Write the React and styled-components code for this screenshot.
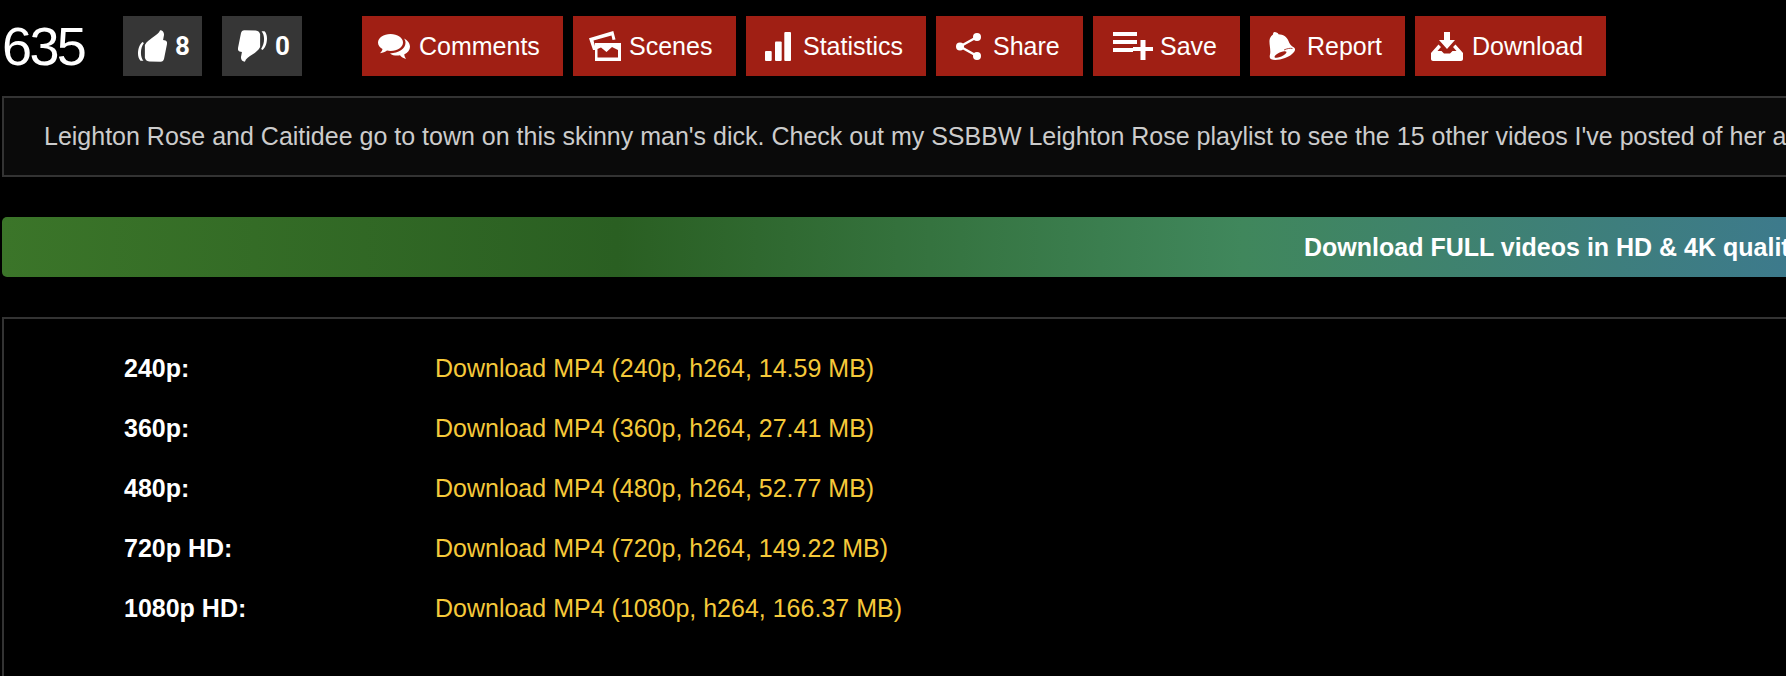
import React from "react";
import styled, { createGlobalStyle } from "styled-components";

const Global = createGlobalStyle`
  html, body { margin: 0; padding: 0; background: #000; overflow: hidden; }
  body { width: 1786px; height: 676px; font-family: "Liberation Sans", Arial, sans-serif; }
`;

const Page = styled.div`
  width: 2600px;
  padding: 16px 0 0 2px;
  box-sizing: border-box;
`;

const Toolbar = styled.div`
  display: flex;
  align-items: stretch;
  height: 60px;
`;

const ViewCount = styled.div`
  width: 121px;
  font-size: 54px;
  line-height: 60px;
  color: #fff;
  letter-spacing: -2.6px;
`;

const VoteButton = styled.div`
  width: ${(p) => p.$w}px;
  margin-right: ${(p) => p.$mr}px;
  box-sizing: border-box;
  padding-left: ${(p) => p.$pl}px;
  background: #363636;
  color: #fff;
  display: flex;
  align-items: center;
  gap: 8px;
  font-family: "Roboto", "Liberation Sans", sans-serif;
  font-weight: 700;
  font-size: 26px;
`;

const ActionButton = styled.div`
  width: ${(p) => p.$w}px;
  margin-right: ${(p) => p.$mr}px;
  box-sizing: border-box;
  padding-left: ${(p) => p.$pl}px;
  background: #a01f14;
  color: #fff;
  display: flex;
  align-items: center;
  gap: ${(p) => p.$gap}px;
  font-size: 25px;
`;

const Description = styled.div`
  margin-top: 20px;
  height: 81px;
  box-sizing: border-box;
  border: 2px solid #333;
  background: #0a0a0a;
  color: #ccc;
  font-size: 25px;
  line-height: 77px;
  padding-left: 40px;
  white-space: nowrap;
`;

const Banner = styled.div`
  margin-top: 40px;
  height: 60px;
  border-radius: 5px;
  background: linear-gradient(90deg, #3b7529 0, #2a5f22 615px, #40875c 1240px, #3d7a8c 1786px, #3d6d9c 2600px);
  color: #fff;
  font-size: 25px;
  font-weight: 700;
  line-height: 60px;
  padding-left: 1302px;
  white-space: nowrap;
`;

const Panel = styled.div`
  margin-top: 40px;
  border: 2px solid #333;
  padding: 19px 0 0 120px;
  height: 400px;
  box-sizing: border-box;
`;

const Row = styled.div`
  display: flex;
  height: 60px;
  align-items: center;
  font-size: 25px;
`;

const Label = styled.div`
  width: 311px;
  font-weight: 700;
  color: #fff;
`;

const DownloadLink = styled.a`
  color: #f5c93a;
  text-decoration: none;
`;

const Icon = styled.svg`
  display: block;
  flex: none;
  fill: #fff;
  transform: ${(p) => (p.$flip ? "rotate(180deg)" : "none")};
`;

const Thumb = ({ down }) => (
  <Icon $flip={down} width="29" height="32" viewBox="0 0 29.5 32">
    <path d="M7 15C9 11 12 9.500 14.500 7.500C18.500 5 21.500 3 22.500 0C25 0 26.500 2 26.500 4.500L25.500 10L28 10.500C29.500 11 29.800 12.500 29.500 14L26.500 29C26 31 25 32 23 32L11.500 31.800C8.500 31.300 7.500 30 7 28Z" />
    <path d="M4.500 12C1 15 0 20 0 24C0 27 1 29.500 2.500 31L5.500 31C3.800 29 3 26 3 23C3 19 4 16 6 13Z" />
  </Icon>
);

const Comments = () => (
  <Icon width="32" height="25" viewBox="0 0 32 25">
    <path d="M12.500 0C5.500 0 0 3.800 0 8.500C0 11.200 1.800 13.500 4.500 15C4.200 16.800 3.300 18 2 19.200C4.800 19 7.200 18 9 16.600C10.200 16.900 11.300 17 12.500 17C19.500 17 25 13.200 25 8.500S19.500 0 12.500 0Z" />
    <path d="M26 4.500C27 5.800 27.500 7.200 27.500 8.800C27.500 14.800 20.500 19.200 12 19.400C13.800 21 16.500 21.500 19 21.500C20 21.500 21 21.400 22 21.200C23.300 22.800 25.300 24.200 28 25C27 23.700 26.400 22.300 26.200 20.600C29.800 19 32 16 32 12.800C32 9.300 29.600 6.200 26 4.500Z" />
  </Icon>
);

const Scenes = () => (
  <Icon width="32" height="30" viewBox="0 0 32 30">
    <path d="M0 7.300L24.300 0L26.500 8.500L23.500 9L22.500 4.500L4.500 9.500L6 15V19L4 19Z" />
    <path fillRule="evenodd" d="M6 12H32V30H6ZM8.500 26.500H29V19L23 16L17.500 21L12 16.500L8.500 18Z" />
  </Icon>
);

const Stats = () => (
  <Icon width="26" height="29" viewBox="0 0 26 29">
    <rect x="0" y="19" width="6.700" height="10" rx="1" />
    <rect x="10" y="9.500" width="6.700" height="19.500" rx="1" />
    <rect x="19.300" y="0" width="6.700" height="29" rx="1" />
  </Icon>
);

const ShareIcon = () => (
  <Icon width="25" height="27" viewBox="0 0 25 27">
    <circle cx="21" cy="4" r="4" />
    <circle cx="4" cy="13.500" r="4" />
    <circle cx="21" cy="23" r="4" />
    <path d="M4 13.500L21 4M4 13.500L21 23" stroke="#fff" strokeWidth="2.500" fill="none" />
  </Icon>
);

const SaveIcon = () => (
  <Icon width="40" height="28" viewBox="0 0 40 28">
    <rect x="0" y="0" width="24" height="4" />
    <rect x="0" y="8" width="24" height="4" />
    <rect x="0" y="16" width="20" height="4" />
    <rect x="20" y="15" width="20" height="4" />
    <rect x="27.500" y="8" width="5" height="20" />
  </Icon>
);

const Bell = () => (
  <Icon width="26" height="28" viewBox="0 0 26 28">
    <path d="M5.500 0C7.500 0 9 1 9.500 2.200C14 2.500 18 4.500 19.500 9C20.500 12 22 14 25 15.500C26.500 16.500 26.300 18.500 25 20C23 22.500 20 24.500 16 26C11 28 5 28.500 2.300 27.300C.5 26.500 .5 24.500 1 22.500C2 18.500 .2 13 .5 8.500C.8 5.500 2.500 3.500 4 2.500C4 1 4.500 0 5.500 0Z" />
    <ellipse cx="11.500" cy="22.500" rx="6.500" ry="2.200" transform="rotate(-24 11.500 22.500)" fill="#a01f14" />
    <path d="M15 18C18 16.500 21 16 23.500 16.500" stroke="#a01f14" strokeWidth=".8" fill="none" />
  </Icon>
);

const DownloadIcon = () => (
  <Icon width="32" height="29" viewBox="0 0 32 29">
    <path d="M13 0H19V8H24L16 17L8 8H13Z" />
    <path d="M7.500 12.500L10 15L6.500 19H10.500L13 21.500H19L21.500 19H25.500L22 15L24.500 12.500L32 21V27C32 28 31 29 30 29H2C1 29 0 28 0 27V21Z" />
  </Icon>
);

const actions = [
  { label: "Comments", icon: <Comments />, w: 201, mr: 10, pl: 16, gap: 9 },
  { label: "Scenes", icon: <Scenes />, w: 163, mr: 10, pl: 16, gap: 8 },
  { label: "Statistics", icon: <Stats />, w: 180, mr: 10, pl: 19, gap: 12 },
  { label: "Share", icon: <ShareIcon />, w: 147, mr: 10, pl: 20, gap: 12 },
  { label: "Save", icon: <SaveIcon />, w: 147, mr: 10, pl: 20, gap: 7 },
  { label: "Report", icon: <Bell />, w: 155, mr: 10, pl: 19, gap: 12 },
  { label: "Download", icon: <DownloadIcon />, w: 191, mr: 0, pl: 16, gap: 9 },
];

const downloads = [
  ["240p:", "Download MP4 (240p, h264, 14.59 MB)"],
  ["360p:", "Download MP4 (360p, h264, 27.41 MB)"],
  ["480p:", "Download MP4 (480p, h264, 52.77 MB)"],
  ["720p HD:", "Download MP4 (720p, h264, 149.22 MB)"],
  ["1080p HD:", "Download MP4 (1080p, h264, 166.37 MB)"],
];

export default function App() {
  return (
    <Page>
      <Global />
      <Toolbar>
        <ViewCount>635</ViewCount>
        <VoteButton $w={79} $mr={20} $pl={15}><Thumb />8</VoteButton>
        <VoteButton $w={80} $mr={60} $pl={16}><Thumb down />0</VoteButton>
        {actions.map((a) => (
          <ActionButton key={a.label} $w={a.w} $mr={a.mr} $pl={a.pl} $gap={a.gap}>
            {a.icon}
            {a.label}
          </ActionButton>
        ))}
      </Toolbar>
      <Description>
        Leighton Rose and Caitidee go to town on this skinny man's dick. Check out my SSBBW Leighton Rose playlist to see the 15 other videos I've posted of her and more.
      </Description>
      <Banner>Download FULL videos in HD &amp; 4K quality</Banner>
      <Panel>
        {downloads.map(([q, t]) => (
          <Row key={q}>
            <Label>{q}</Label>
            <DownloadLink href="#">{t}</DownloadLink>
          </Row>
        ))}
      </Panel>
    </Page>
  );
}
